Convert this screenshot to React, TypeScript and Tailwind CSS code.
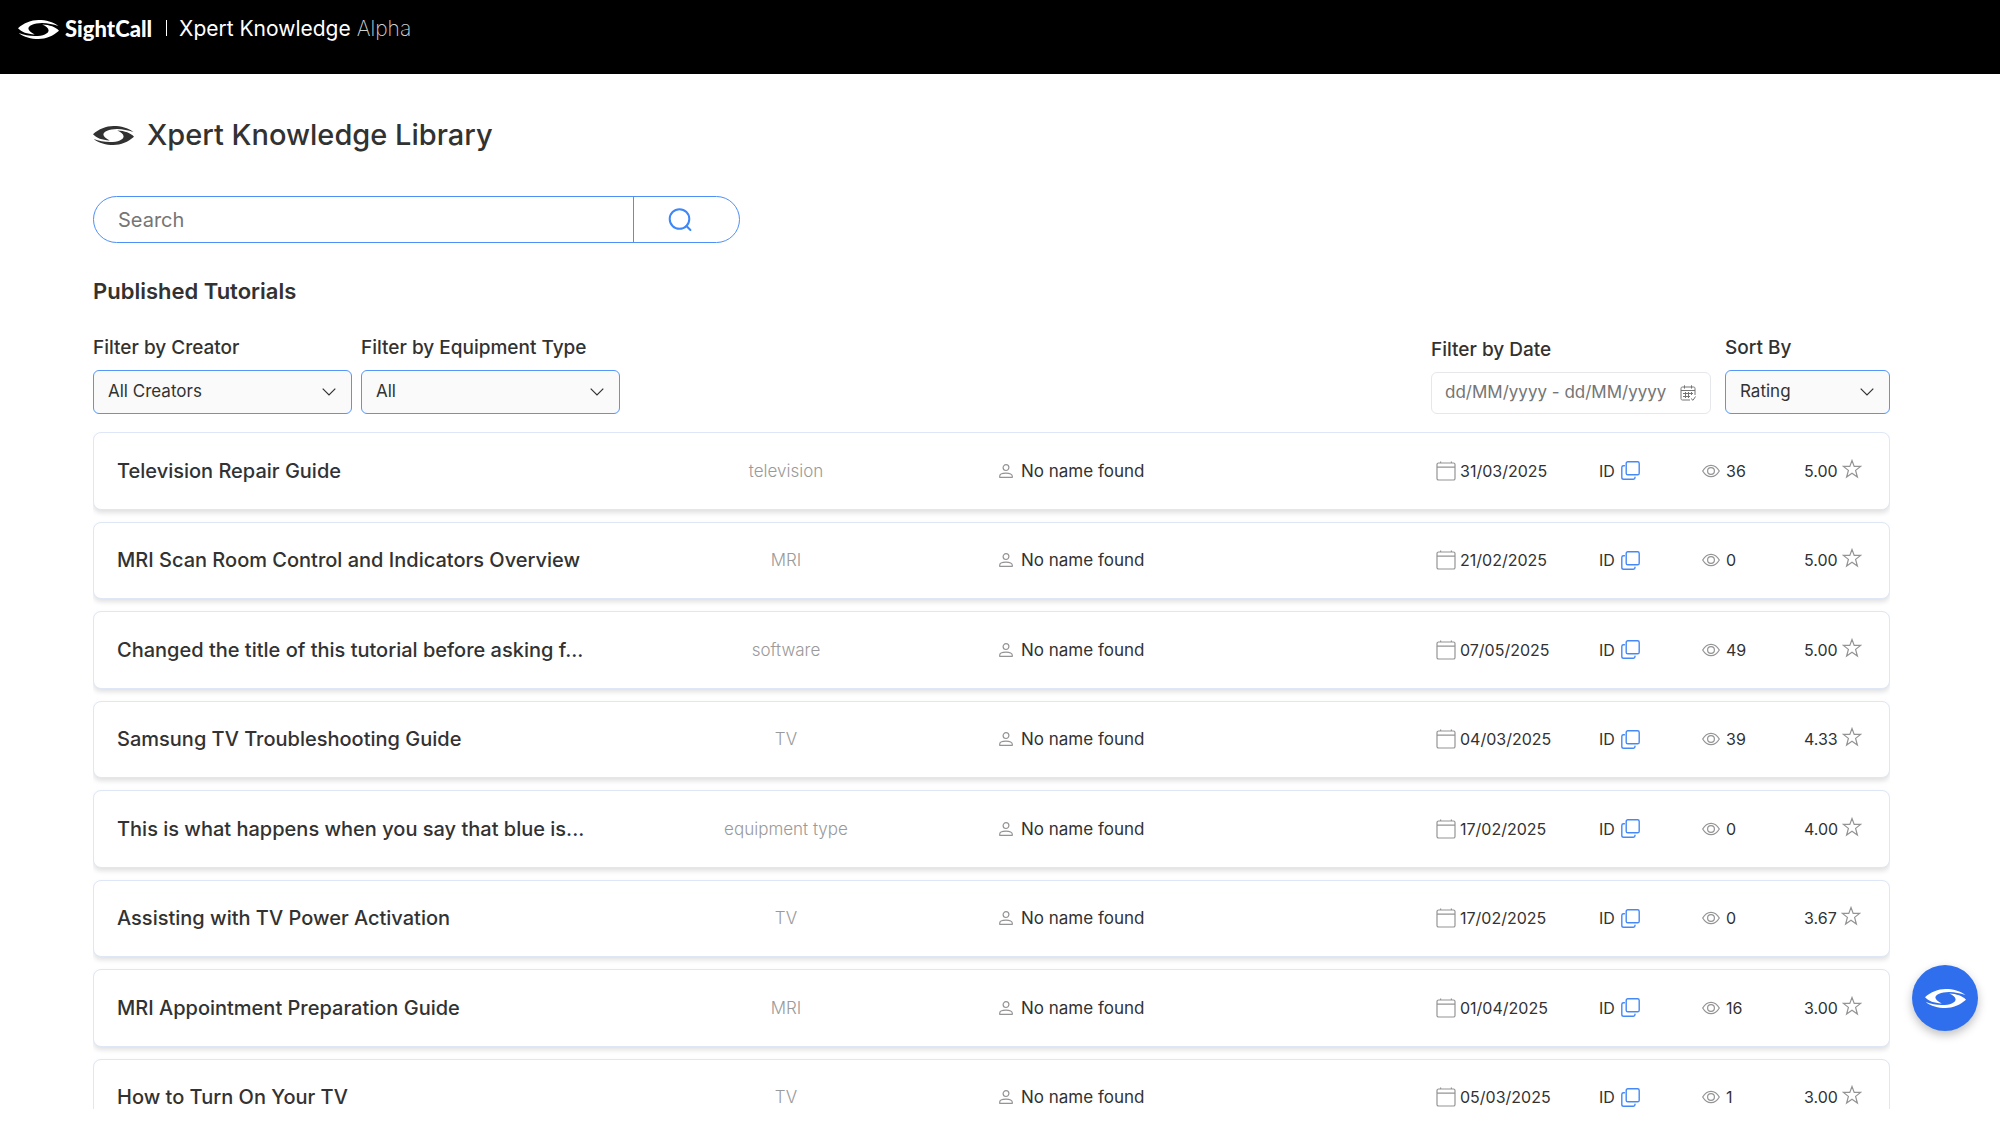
import { useState } from "react";

type Tutorial = {
  title: string;
  equipment: string;
  creator: string;
  date: string;
  views: number;
  rating: string;
};

const tutorials: Tutorial[] = [
  { title: "Television Repair Guide", equipment: "television", creator: "No name found", date: "31/03/2025", views: 36, rating: "5.00" },
  { title: "MRI Scan Room Control and Indicators Overview", equipment: "MRI", creator: "No name found", date: "21/02/2025", views: 0, rating: "5.00" },
  { title: "Changed the title of this tutorial before asking f...", equipment: "software", creator: "No name found", date: "07/05/2025", views: 49, rating: "5.00" },
  { title: "Samsung TV Troubleshooting Guide", equipment: "TV", creator: "No name found", date: "04/03/2025", views: 39, rating: "4.33" },
  { title: "This is what happens when you say that blue is...", equipment: "equipment type", creator: "No name found", date: "17/02/2025", views: 0, rating: "4.00" },
  { title: "Assisting with TV Power Activation", equipment: "TV", creator: "No name found", date: "17/02/2025", views: 0, rating: "3.67" },
  { title: "MRI Appointment Preparation Guide", equipment: "MRI", creator: "No name found", date: "01/04/2025", views: 16, rating: "3.00" },
  { title: "How to Turn On Your TV", equipment: "TV", creator: "No name found", date: "05/03/2025", views: 1, rating: "3.00" },
];

const eyeHalf =
  "M0 8.2C6 3 13 0 20.5 0 28 0 35 1.8 40.4 6 35 4.1 30 3 24 2.9 16 3 10.4 5.6 10.4 8.6 10.4 10.8 13 12.8 16.8 14.4 9 14 3.5 12 0 8.2Z";

function EyeLogo({ className }: { className?: string }) {
  return (
    <svg viewBox="0 0 41 19" className={className} fill="currentColor" aria-hidden="true">
      <path d={eyeHalf} />
      <path d={eyeHalf} transform="rotate(180 20.5 9.5)" />
    </svg>
  );
}

function SearchIcon() {
  return (
    <svg viewBox="0 0 24 24" className="size-6" fill="none" stroke="currentColor" strokeWidth="2" strokeLinecap="round" aria-hidden="true">
      <circle cx="11.5" cy="11" r="9.8" />
      <path d="M18.4 18L22.4 22" />
    </svg>
  );
}

function PersonIcon() {
  return (
    <svg viewBox="0 0 14 14" className="size-3.5 shrink-0 text-[#949494]" fill="none" stroke="currentColor" strokeWidth="1.2" strokeLinejoin="round" aria-hidden="true">
      <circle cx="7" cy="3.6" r="2.9" />
      <path d="M.7 13.3V12.2C.7 10.4 3 9.2 7 9.2S13.3 10.4 13.3 12.2V13.3Z" />
    </svg>
  );
}

function CalendarIcon() {
  return (
    <svg viewBox="0 0 20 20" className="size-5 shrink-0 text-[#949494]" fill="none" stroke="currentColor" strokeWidth="1.2" aria-hidden="true">
      <rect x="1" y="2" width="18" height="17" rx="1.6" />
      <path d="M1 6.2H19M4.6 .5V2M15.4 .5V2" />
    </svg>
  );
}

function CopyIcon() {
  return (
    <svg viewBox="0 0 19 19" className="size-[19px]" fill="none" stroke="currentColor" strokeWidth="1.4" strokeLinecap="round" aria-hidden="true">
      <rect x="5.2" y=".8" width="13" height="13" rx="1.6" />
      <path d="M3.4 4.7H2.6C1.5 4.7.8 5.4.8 6.4V16.4C.8 17.5 1.5 18.2 2.6 18.2H12.4C13.4 18.2 14 17.6 14 16.6V16.2" />
    </svg>
  );
}

function ViewsIcon() {
  return (
    <svg viewBox="0 0 18 14" className="h-3.5 w-[18px] shrink-0 text-[#949494]" fill="none" stroke="currentColor" strokeWidth="1.2" aria-hidden="true">
      <path d="M.7 7C3 3 5.8 1.3 9 1.3S15 3 17.3 7C15 11 12.2 12.7 9 12.7S3 11 .7 7Z" />
      <circle cx="9" cy="7" r="3.4" />
    </svg>
  );
}

function StarIcon() {
  return (
    <svg viewBox="0 0 20 20" className="size-5 shrink-0 text-[#949494]" fill="none" stroke="currentColor" strokeWidth="1.2" aria-hidden="true">
      <path d="M10 1.5L12.2 7.4H18.6L13.6 11.4L15.4 18L10 14.2L4.6 18L6.4 11.4L1.4 7.4H7.8Z" />
    </svg>
  );
}

function DateRangeIcon() {
  return (
    <svg viewBox="0 0 16 16" className="size-4 shrink-0" fill="none" stroke="currentColor" aria-hidden="true">
      <path d="M10 15H2.5C1.5 15 1 14.5 1 13.5V3.5C1 2.5 1.5 2 2.5 2H13.5C14.5 2 15 2.5 15 3.5V10" />
      <path d="M4.5 .3V3.6M11.5 .3V3.6M1 5.5H15M3 8.5H13M3 11.5H10M5.5 7V13M8.5 7V13M11.5 7V10" />
      <path d="M11 13.5L13 15.3L15.5 11.5" />
    </svg>
  );
}

function FilterSelect({ id, label, options, className }: { id: string; label: string; options: string[]; className: string }) {
  return (
    <div className={className}>
      <label htmlFor={id} className="mb-2.5 block text-[19px] leading-6 font-medium">
        {label}
      </label>
      <div className="relative">
        <select id={id} className="h-11 w-full appearance-none rounded-md border border-[#5596f7] bg-[#fafafa] pr-10 pl-3.5 text-[17px] outline-none">
          {options.map((option) => (
            <option key={option}>{option}</option>
          ))}
        </select>
        <svg viewBox="0 0 14 8" className="pointer-events-none absolute top-[18px] right-4 h-2 w-3.5" fill="none" stroke="currentColor" strokeWidth="1.2" aria-hidden="true">
          <path d="M.7 .7L7 7L13.3 .7" />
        </svg>
      </div>
    </div>
  );
}

function TutorialCard({ tutorial }: { tutorial: Tutorial }) {
  return (
    <li className="grid grid-cols-[460fr_418fr_437fr_167fr_103fr_102fr_62fr] items-center rounded-lg border border-[#dfe6f5] bg-white px-[23px] shadow-[0_3px_5px_rgba(0,0,0,0.12)]">
      <h3 className="min-w-0 text-xl leading-6 font-medium whitespace-nowrap">{tutorial.title}</h3>
      <span className="text-center text-[17px] leading-6 font-light text-[#9a9a9a]">{tutorial.equipment}</span>
      <span className="flex items-center gap-2 pl-1 text-[17px] leading-6 whitespace-nowrap">
        <PersonIcon />
        {tutorial.creator}
      </span>
      <span className="flex items-center gap-1 pl-1 text-base leading-6">
        <CalendarIcon />
        {tutorial.date}
      </span>
      <span className="flex items-center gap-1.5 text-base leading-6">
        ID
        <button type="button" aria-label="Copy ID" className="text-[#4489f7]">
          <CopyIcon />
        </button>
      </span>
      <span className="flex items-center gap-1.5 text-base leading-6">
        <ViewsIcon />
        {tutorial.views}
      </span>
      <span className="flex items-center gap-1 text-base leading-6">
        {tutorial.rating}
        <span className="pb-1">
          <StarIcon />
        </span>
      </span>
    </li>
  );
}

export default function App() {
  const [query, setQuery] = useState("");

  return (
    <div className="flex h-screen flex-col bg-white pb-6 font-['Inter',sans-serif] text-[#323232]">
      {/* Header */}
      <header className="flex h-[74px] shrink-0 items-start bg-black px-[18px] pt-3.5 text-white">
        <a href="#" className="flex h-[30px] items-center gap-1.5">
          <EyeLogo className="h-[19px] w-[41px]" />
          <span className="font-['Lato',sans-serif] text-[22px] leading-7 font-black">SightCall</span>
        </a>
        <div className="mt-1.5 ml-3.5 h-4 w-px bg-white" />
        <p className="ml-3 text-[21px] leading-[30px]">
          Xpert Knowledge <span className="font-extralight text-[#d0d0d0]">Alpha</span>
        </p>
      </header>

      <main className="flex min-h-0 flex-1 flex-col pt-[41px] pr-[110px] pl-[93px]">
        <div className="flex h-10 shrink-0 items-center gap-[13px]">
          <EyeLogo className="h-[19px] w-[41px]" />
          <h1 className="text-[29px] leading-10 font-medium">Xpert Knowledge Library</h1>
        </div>

        {/* Search */}
        <form className="mt-[41px] flex h-[47px] w-[647px] shrink-0 overflow-hidden rounded-full border border-[#4d90f7]" onSubmit={(e) => e.preventDefault()}>
          <input
            type="text"
            aria-label="Search"
            placeholder="Search"
            value={query}
            onChange={(e) => setQuery(e.target.value)}
            className="min-w-0 flex-1 pl-6 text-xl outline-none placeholder:text-[#757575]"
          />
          <button type="submit" aria-label="Run search" className="flex w-[106px] items-center border-l border-[#4d90f7] pl-[34px] text-[#3d87f8]">
            <SearchIcon />
          </button>
        </form>

        <h2 className="mt-[34px] text-[22px] leading-7 font-semibold">Published Tutorials</h2>

        {/* Filters */}
        <div className="mt-[31px] flex shrink-0 items-end justify-between">
          <div className="flex gap-[9px]">
            <FilterSelect id="creator" label="Filter by Creator" options={["All Creators"]} className="w-[259px]" />
            <FilterSelect id="equipment" label="Filter by Equipment Type" options={["All", "MRI", "TV", "software", "television"]} className="w-[259px]" />
          </div>
          <div className="flex items-end gap-3.5">
            <div className="w-[280px]">
              <label htmlFor="date" className="mb-2.5 block text-[19px] leading-6 font-medium">
                Filter by Date
              </label>
              <div className="flex h-[42px] items-center gap-3 rounded-md border border-[#e5e7eb] pr-3.5 pl-[13px] text-[#757575]">
                <input id="date" type="text" placeholder="dd/MM/yyyy - dd/MM/yyyy" className="min-w-0 flex-1 text-[17px] outline-none placeholder:text-[#757575]" />
                <DateRangeIcon />
              </div>
            </div>
            <FilterSelect id="sort" label="Sort By" options={["Rating", "Date", "Views"]} className="w-[165px]" />
          </div>
        </div>

        {/* Tutorials */}
        <div className="mt-[18px] min-h-0 flex-1 overflow-hidden">
          <ul className="grid min-h-[704px] auto-rows-fr gap-3">
            {tutorials.map((tutorial) => (
              <TutorialCard key={tutorial.title} tutorial={tutorial} />
            ))}
          </ul>
        </div>
      </main>

      {/* Assistant launcher */}
      <button
        type="button"
        aria-label="Open assistant"
        className="fixed right-[22px] bottom-[102px] flex size-[66px] items-center justify-center rounded-full bg-[#2f6fed] text-white shadow-[0_4px_10px_rgba(0,0,0,0.25)]"
      >
        <EyeLogo className="h-[19px] w-[41px]" />
      </button>
    </div>
  );
}
